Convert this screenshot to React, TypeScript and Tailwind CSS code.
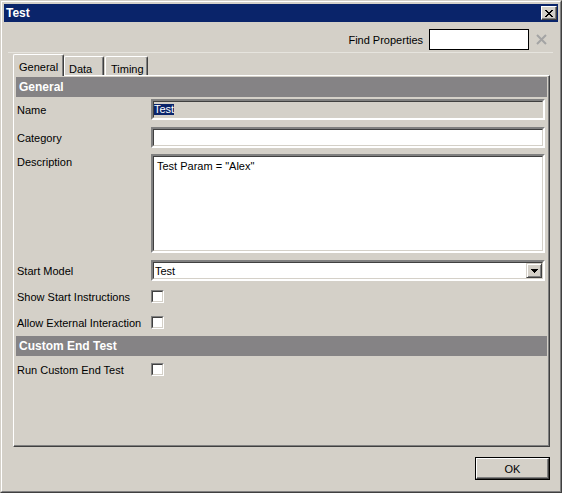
import React from "react";

const font = { fontFamily: '"Liberation Sans", Arial, sans-serif' };

const sunken =
  "border-2 border-t-[#808080] border-l-[#808080] border-r-white border-b-white";

function Sunken({ className, children }: { className?: string; children?: React.ReactNode }) {
  return (
    <div className={`${sunken} ${className ?? ""}`}>
      <div className="w-full h-full border border-t-[#404040] border-l-[#404040] border-r-[#d4d0c8] border-b-[#d4d0c8] box-border">
        {children}
      </div>
    </div>
  );
}

function Checkbox() {
  return (
    <div className="w-[13px] h-[13px] border border-t-[#808080] border-l-[#808080] border-r-white border-b-white">
      <div className="w-full h-full border border-t-[#404040] border-l-[#404040] border-r-[#d4d0c8] border-b-[#d4d0c8] bg-white" />
    </div>
  );
}

function Header({ title }: { title: string }) {
  return (
    <div className="h-[20px] bg-[#858385] flex items-center pl-[3px] pt-[1px] text-white font-bold text-[12px]">
      {title}
    </div>
  );
}

function Row({ label, children, h, top }: { label: string; children: React.ReactNode; h: string; top?: boolean }) {
  return (
    <div className={`flex ${h} ${top ? "items-start" : "items-center"}`}>
      <div className={`w-[135px] pl-[1px] shrink-0 ${top ? "pt-[2px]" : "pt-[2px]"}`}>{label}</div>
      <div className="flex-1 h-full pr-[2px]">{children}</div>
    </div>
  );
}

function CheckRow({ label }: { label: string }) {
  return (
    <div className="flex items-center h-[26px]">
      <div className="w-[135px] pl-[1px] pt-[2px] shrink-0">{label}</div>
      <Checkbox />
    </div>
  );
}

export default function App() {
  return (
    <div
      className="w-[562px] h-[493px] bg-[#d4d0c8] border border-t-[#d4d0c8] border-l-[#d4d0c8] border-r-[#404040] border-b-[#404040] text-[11px] text-black leading-[13px] overflow-hidden"
      style={font}
    >
      <div className="w-full h-full border border-t-white border-l-white border-r-[#808080] border-b-[#808080] p-[2px] flex flex-col">
        {/* Title bar */}
        <div className="h-[18px] bg-[#0a246a] flex items-center justify-between pl-[2px] pr-[1px] shrink-0">
          <span className="text-white font-bold text-[12px]">Test</span>
          <div className="w-[16px] h-[14px] bg-[#d4d0c8] border border-t-white border-l-white border-r-[#404040] border-b-[#404040] flex items-center justify-center shadow-[inset_-1px_-1px_0_#808080]">
            <svg width="8" height="7" viewBox="0 0 8 7" shapeRendering="crispEdges">
              <path
                fill="#000"
                d="M0 0h2v1H0zM6 0h2v1H6zM1 1h2v1H1zM5 1h2v1H5zM2 2h4v1H2zM3 3h2v1H3zM2 4h4v1H2zM1 5h2v1H1zM5 5h2v1H5zM0 6h2v1H0zM6 6h2v1H6z"
              />
            </svg>
          </div>
        </div>

        {/* Find properties */}
        <div className="flex items-center justify-end h-[21px] mt-[7px] pr-[11px] shrink-0">
          <span className="pt-[1px]">Find Properties</span>
          <div className="ml-[6px] w-[100px] h-[21px] bg-white border border-black" />
          <svg className="ml-[7px]" width="11" height="11" viewBox="0 0 11 11">
            <path d="M1 1L10 10M10 1L1 10" stroke="#a4a4a4" strokeWidth="2" />
          </svg>
        </div>
        <div className="h-px bg-[#e6e4de] ml-[4px] mr-[5px] mt-[2px] shrink-0" />

        {/* Tabs */}
        <div className="flex items-end h-[21px] mt-[1px] ml-[9px] shrink-0">
          <div className="relative z-10 w-[51px] h-[22px] mb-[-1px] bg-[#d4d0c8] border-t border-l border-r border-t-white border-l-white border-r-[#404040] rounded-t-[2px] pl-[5px] pt-[6px] shadow-[inset_-1px_0_0_#808080]">
            General
          </div>
          <div className="w-[40px] h-[19px] bg-[#d4d0c8] border-t border-l border-r border-t-white border-l-white border-r-[#404040] rounded-t-[2px] pl-[4px] pt-[6px] shadow-[inset_-1px_0_0_#808080]">
            Data
          </div>
          <div className="ml-[1px] w-[43px] h-[19px] bg-[#d4d0c8] border-t border-l border-r border-t-white border-l-white border-r-[#404040] rounded-t-[2px] pl-[5px] pt-[6px] shadow-[inset_-1px_0_0_#808080]">
            Timing
          </div>
        </div>

        {/* Panel */}
        <div className="ml-[9px] mr-[8px] h-[372px] shrink-0 border border-t-white border-l-white border-r-[#404040] border-b-[#404040] shadow-[inset_-1px_-1px_0_#808080] pl-[2px] pr-[2px] pt-[1px]">
          <Header title="General" />
          <div className="mt-[2px]">
            <Row label="Name" h="h-[21px]">
              <Sunken className="h-full bg-[#d4d0c8]">
                <div className="h-full flex items-center">
                  <span className="bg-[#0a246a] text-white h-[11px] leading-[11px] px-0">Test</span>
                </div>
              </Sunken>
            </Row>
          </div>
          <div className="mt-[7px]">
            <Row label="Category" h="h-[21px]">
              <Sunken className="h-full bg-white" />
            </Row>
          </div>
          <div className="mt-[6px]">
            <Row label="Description" h="h-[99px]" top>
              <Sunken className="h-full bg-white">
                <div className="pl-[3px] pt-[3px]">Test Param = "Alex"</div>
              </Sunken>
            </Row>
          </div>
          <div className="mt-[7px]">
            <Row label="Start Model" h="h-[21px]">
              <Sunken className="h-full bg-white">
                <div className="h-full flex items-center justify-between">
                  <span className="pl-[1px] pt-[1px]">Test</span>
                  <div className="w-[16px] h-full bg-[#d4d0c8] border border-t-[#d4d0c8] border-l-[#d4d0c8] border-r-[#404040] border-b-[#404040] shadow-[inset_1px_1px_0_white,inset_-1px_-1px_0_#808080] flex items-center justify-center">
                    <svg width="7" height="4" viewBox="0 0 7 4" shapeRendering="crispEdges">
                      <path fill="#000" d="M0 0h7v1H0zM1 1h5v1H1zM2 2h3v1H2zM3 3h1v1H3z" />
                    </svg>
                  </div>
                </div>
              </Sunken>
            </Row>
          </div>
          <div className="mt-[2px]">
            <CheckRow label="Show Start Instructions" />
            <CheckRow label="Allow External Interaction" />
          </div>
          <div className="mt-[1px]">
            <Header title="Custom End Test" />
          </div>
          <CheckRow label="Run Custom End Test" />
        </div>

        {/* Footer */}
        <div className="flex justify-end mt-[10px] mr-[8px] shrink-0">
          <div className="w-[75px] h-[23px] border border-black">
            <div className="w-full h-full border border-t-white border-l-white border-r-[#404040] border-b-[#404040] shadow-[inset_-1px_-1px_0_#808080] flex items-center justify-center pt-[1px]">
              OK
            </div>
          </div>
        </div>
      </div>
    </div>
  );
}
